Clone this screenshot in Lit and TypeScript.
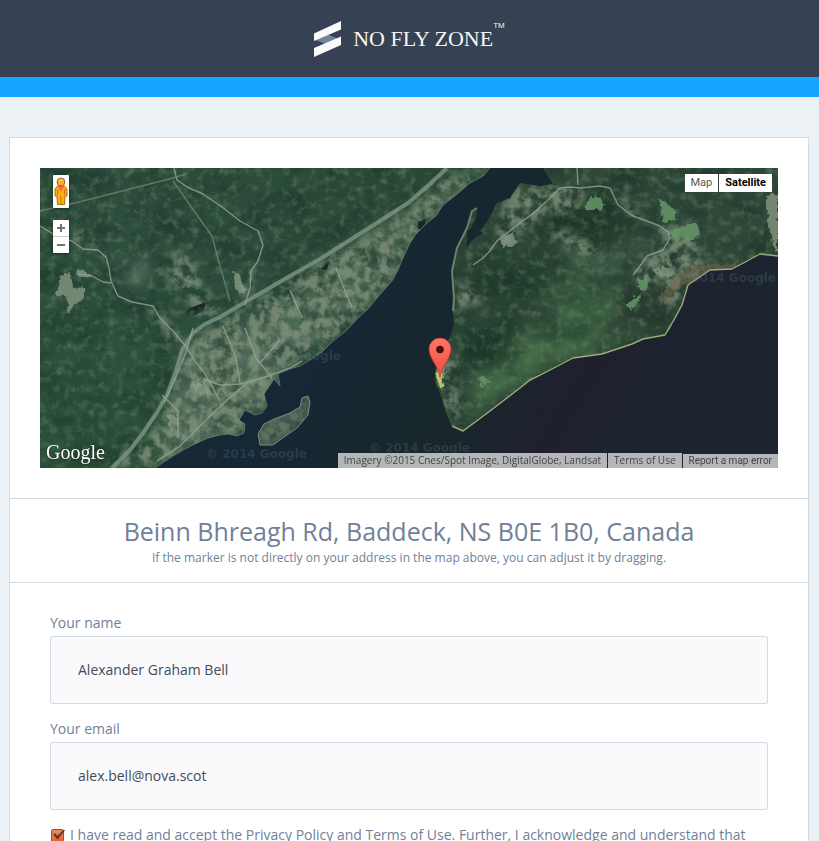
import { LitElement, html, css, svg } from "lit";
import { customElement, property, state } from "lit/decorators.js";

const EAST_SHORE =
  "M738 88L720 86L706 93L692 101L670 102L660 109L648 117L644 126L642 137L635 150L630 162L625 167L614 168L603 171L592 176L575 181L562 186L533 190L520 196L510 202L498 206L490 212L480 220L462 234L450 243L436 252L423 263L412 258L406 244L402 230L396 216L395 206L398 190L404 178L410 170L414 156L413 143L414 130L412 118L412 103L417 80L427 60L432 43L437 40L436 50L428 66L426 80L438 66L447 54L457 35L470 30L480 15L500 18L513 16L508 8L503 0";
const WEST_SHORE =
  "M450 0L443 8L430 15L416 27L403 37L396 48L387 55L376 66L370 75L363 90L358 102L352 113L344 122L337 130L328 141L318 150L306 163L293 173L282 184L270 192L260 198L250 201L238 206L240 218L234 211L230 217L224 226L227 238L222 245L215 247L205 242L199 252L205 256L204 265L197 268L188 266L180 267L168 270L157 275L145 281L133 288L115 300";
const ISLAND =
  "M218 266L224 256L234 251L250 245L260 239L262 230L268 228L270 234L268 247L257 260L244 269L233 277L220 277Z";

const MAIN_ROADS = [
  "M407 0L390 16L368 35L340 53L310 72L280 91L250 108L207 133L180 149L165 156L153 165L142 182L136 203L127 227L116 246L103 265L90 282L72 300",
];
const ROADS = [
  "M134 0L137 12L147 19L163 26L182 39L200 53L218 63L223 77L218 93L211 103L210 120L205 137",
  "M0 58L20 70L32 73L43 81L58 82L66 89L69 100L71 113L78 128L92 134L113 138L120 150L133 163L147 180L155 193L163 203L172 218L180 233",
  "M37 106L50 107L63 114L71 115",
  "M117 293L140 278L163 255L187 232L207 215L228 208L250 200L262 193",
  "M163 211L180 217L200 216L232 207",
  "M500 40L480 55L457 73L449 84L443 90L433 97",
  "M490 48L507 33L520 20L530 19L540 20L560 18L570 20L578 37L593 48L607 53L620 58L628 64L630 70L623 82L607 88L600 98L593 107",
  "M537 0L538 17",
  "M153 160L146 184L136 209L124 235",
  "M122 227L138 243L138 270M183 158L196 190L200 216M205 160L216 190L232 210",
  "M296 100L312 140M250 122L262 150M240 172L220 195",
];
const DIRT = ["M0 43L43 33L90 21L133 10L146 6", "M133 13L152 40L172 68L180 98L190 133"];

const SCRUB = [
  "M392 14L448 0L452 2L428 18L402 38L386 58L370 76L352 113L318 150L285 180L250 198L234 208L226 242L205 243L205 266L180 266L115 298L60 300L104 270L124 250L128 238L142 190L158 168L186 152L250 112L310 78L370 42Z",
  "M136 76L152 92L160 110L170 128L182 146L158 150L144 128L126 112Z",
  "M200 104L214 92L212 126L200 132Z",
  "M32 62L44 60L60 80L38 82Z",
  "M102 136L118 140L148 176L134 178Z",
  "M80 0L92 0L90 6L80 8Z",
  "M464 32L484 12L492 20L520 16L548 20L536 50L510 42L490 58L462 78L454 72Z",
  "M507 58L528 62L556 78L564 90L540 88L516 72Z",
  "M568 22L592 32L600 50L620 58L650 56L664 70L658 94L680 96L648 114L640 136L620 138L626 112L604 120L590 108L606 88L626 80L620 64L592 48Z",
  "M395 200L404 182L418 190L416 220L424 244L412 254L400 228Z",
  "M412 110L422 118L440 122L442 138L428 136L412 146Z",
];
const PALE_FIELDS = [
  "M20 108L30 104L33 120L44 119L44 130L34 136L30 145L26 141L28 130L16 126Z",
  "M34 103L44 103L52 108L38 109Z",
  "M193 102L200 108L205 124L200 128L195 117Z",
  "M126 247L136 246L139 256L130 260Z",
  "M148 216L164 214L174 226L162 228Z",
  "M460 70L474 66L476 77L462 79Z",
  "M613 102L624 98L637 106L622 110Z",
  "M726 28L738 26L738 86L733 77L732 66L727 58L728 44Z",
  "M396 208L400 188L406 192L402 216Z",
];
const GREEN_FIELDS = [
  "M620 32L625 33L637 46L635 51L623 55Z",
  "M628 63L657 55L660 67L652 73L642 69L632 72Z",
  "M585 137L600 126L601 130L591 141Z",
  "M598 112L607 108L608 120L600 124Z",
  "M545 36L552 29L562 30L563 43L548 42Z",
  "M439 210L446 209L450 214L443 220Z",
];

@customElement("satellite-map")
export class SatelliteMap extends LitElement {
  @state() private view: "map" | "satellite" = "satellite";

  static styles = css`
    :host {
      display: block;
      position: relative;
      height: 300px;
      overflow: hidden;
      background: #19242c;
    }
    .imagery {
      display: block;
      width: 100%;
      height: 100%;
    }
    button {
      display: block;
      margin: 0;
      padding: 0;
      border: 0;
      background: #fff;
      cursor: pointer;
    }
    .tools {
      position: absolute;
      top: 7px;
      left: 13px;
      width: 16px;
      display: grid;
      gap: 12px;
    }
    .pegman {
      width: 16px;
      height: 33px;
      border-radius: 1px;
      box-shadow: 0 1px 3px rgba(0, 0, 0, 0.4);
    }
    .pegman svg,
    .zoom svg {
      display: block;
      margin: auto;
    }
    .zoom {
      border-radius: 1px;
      overflow: hidden;
      box-shadow: 0 1px 3px rgba(0, 0, 0, 0.4);
    }
    .zoom button {
      width: 16px;
      height: 16px;
    }
    .zoom button + button {
      border-top: 1px solid #ccc;
      height: 17px;
    }
    .types {
      position: absolute;
      top: 6px;
      right: 6px;
      display: flex;
      gap: 1px;
      font: 11px/18px Roboto, sans-serif;
    }
    .types button {
      height: 18px;
      padding: 0 6px;
      font: inherit;
      color: #565656;
    }
    .types .active {
      font-weight: 700;
      color: #000;
    }
    .credits {
      position: absolute;
      right: 0;
      bottom: 0;
      display: flex;
      align-items: flex-end;
      gap: 1px;
      font: 10px/14px "Open Sans", sans-serif;
      color: #444;
    }
    .credits > * {
      padding: 0 6px 1px;
      background: rgba(245, 245, 245, 0.7);
      color: #444;
      text-decoration: none;
      white-space: nowrap;
    }
    .credits .report {
      padding-bottom: 0;
      font-family: Roboto, sans-serif;
    }
    .brand {
      position: absolute;
      left: 6px;
      bottom: 2px;
      font: 20px/28px "Liberation Serif", serif;
      color: #fff;
      text-decoration: none;
      text-shadow: 0 0 2px rgba(0, 0, 0, 0.6);
    }
  `;

  private renderImagery() {
    return html`<svg class="imagery" viewBox="0 0 738 300" preserveAspectRatio="xMidYMid slice" color-interpolation-filters="sRGB" role="img" aria-label="Satellite view">
      <defs>
        <linearGradient id="water" x1="0" x2="1" y1="0" y2="0.25">
          <stop offset="0" stop-color="#1a2b34"></stop>
          <stop offset="0.48" stop-color="#162736"></stop>
          <stop offset="0.7" stop-color="#18272b"></stop>
          <stop offset="0.86" stop-color="#1f202e"></stop>
          <stop offset="1" stop-color="#1c2430"></stop>
        </linearGradient>
        <linearGradient id="west" x1="0" x2="1" y1="1" y2="0">
          <stop offset="0" stop-color="#2c5139"></stop>
          <stop offset="0.5" stop-color="#2d4d3d"></stop>
          <stop offset="1" stop-color="#2a4935"></stop>
        </linearGradient>
        <linearGradient id="pin" x1="0" x2="0" y1="0" y2="1">
          <stop offset="0" stop-color="#ff776b"></stop>
          <stop offset="1" stop-color="#f04a3f"></stop>
        </linearGradient>
        <filter id="relief" x="0" y="0" width="100%" height="100%">
          <feTurbulence type="fractalNoise" baseFrequency="0.03 0.04" numOctaves="5" seed="8"></feTurbulence>
          <feColorMatrix values="0 0 0 0 0.08  0 0 0 0 0.18  0 0 0 0 0.14  2.6 0 0 0 -1.05"></feColorMatrix>
        </filter>
        <filter id="grain" x="0" y="0" width="100%" height="100%">
          <feTurbulence type="fractalNoise" baseFrequency="0.12" numOctaves="4" seed="3"></feTurbulence>
          <feColorMatrix values="0 0 0 0 0.42  0 0 0 0 0.55  0 0 0 0 0.43  0 2.4 0 0 -1.15"></feColorMatrix>
        </filter>
        <filter id="scrub" x="-5%" y="-5%" width="110%" height="110%">
          <feGaussianBlur in="SourceGraphic" stdDeviation="4" result="soft"></feGaussianBlur>
          <feTurbulence type="fractalNoise" baseFrequency="0.1" numOctaves="5" seed="21"></feTurbulence>
          <feColorMatrix values="0 0 0 0 0  0 0 0 0 0  0 0 0 0 0  0 0 3.6 0 -1.35" result="mask"></feColorMatrix>
          <feComposite in="soft" in2="mask" operator="in"></feComposite>
        </filter>
        <filter id="rough" x="-10%" y="-10%" width="120%" height="120%">
          <feTurbulence type="fractalNoise" baseFrequency="0.2" numOctaves="2" seed="5" result="n"></feTurbulence>
          <feDisplacementMap in="SourceGraphic" in2="n" scale="8" xChannelSelector="R" yChannelSelector="G"></feDisplacementMap>
          <feGaussianBlur stdDeviation="0.6"></feGaussianBlur>
        </filter>
        <filter id="haze" x="-30%" y="-30%" width="160%" height="160%"><feGaussianBlur stdDeviation="7"></feGaussianBlur></filter>
        <clipPath id="land">
          <path d="${WEST_SHORE}H0V0Z"></path>
          <path d="${EAST_SHORE}H738Z"></path>
          <path d=${ISLAND}></path>
        </clipPath>
      </defs>
      <rect width="738" height="300" fill="url(#water)"></rect>
      <g clip-path="url(#land)">
        <rect width="520" height="300" fill="url(#west)"></rect>
        <path d="${EAST_SHORE}H738Z" fill="#2f4839"></path>
        <path d=${ISLAND} fill="#46594e"></path>
        <g filter="url(#haze)">
          <path d="M440 195L490 165L550 130L610 150L600 170L530 188L480 215L440 240L420 255Z" fill="#4a734b" opacity="0.8"></path>
          <path d="M490 120L540 100L590 110L580 140L520 160Z" fill="#3f6546" opacity="0.6"></path>
          <path d="M515 62L570 92L625 62L632 74L600 88L560 108L520 92Z" fill="#52735a" opacity="0.55"></path>
          <path d="M80 92L108 86L106 116L86 118Z" fill="#5c7766" opacity="0.7"></path>
          <path d="M508 40L568 24L600 60L550 80L500 66Z" fill="#1c3527" opacity="0.7"></path>
          <path d="M440 80L500 88L520 116L460 150L430 130Z" fill="#223f2d" opacity="0.7"></path>
          <path d="M418 160L480 150L460 205L430 200Z" fill="#1d3a2a" opacity="0.8"></path>
          <path d="M590 98L630 120L646 120L630 160L560 175L570 150Z" fill="#2a3c31" opacity="0.8"></path>
          <path d="M142 190L158 168L190 152L250 140L290 165L250 198L230 230L200 260L120 296L124 250Z" fill="#5d7463" opacity="0.7"></path>
          <path d="M250 112L390 24L440 4L370 76L352 113L318 150L270 150Z" fill="#4d6853" opacity="0.7"></path>
        </g>
        <rect width="738" height="300" filter="url(#relief)" opacity="0.45"></rect>
        <g filter="url(#scrub)" fill="#87967f" opacity="0.75">${SCRUB.map((d) => svg`<path d=${d}></path>`)}<path d=${ISLAND} fill="#6e7b6e"></path></g>
        <g filter="url(#rough)">
          <g fill="#93a38a" opacity="0.7">${PALE_FIELDS.map((d) => svg`<path d=${d}></path>`)}</g>
          <g fill="#659868" opacity="0.85">${GREEN_FIELDS.map((d) => svg`<path d=${d}></path>`)}</g>
          <path d="M640 106L652 98L666 98L690 96L704 90L692 101L670 102L648 117L636 122L622 138L618 128Z" fill="#75644d" opacity="0.5"></path>
          <path d="M394 205L400 202L403 214L402 224Z" fill="#c6c969"></path>
        </g>
        <g fill="#142b23">
          <path d="M146 148C145 139 158 138 165 134C167 143 155 150 146 148Z"></path>
          <path d="M281 101L289 94L287 102Z"></path>
          <path d="M378 54L386 51L384 62L378 61Z"></path>
          <path d="M427 62L438 60L443 66L434 70L426 80Z"></path>
        </g>
        <rect width="738" height="300" filter="url(#grain)" opacity="0.5"></rect>
        <g fill="none" stroke-linejoin="round">
          <g stroke="#7a9080" stroke-width="4" opacity="0.85">${MAIN_ROADS.map((d) => svg`<path d=${d}></path>`)}</g>
          <g stroke="#93a596" stroke-width="1.4" opacity="0.8">${ROADS.map((d) => svg`<path d=${d}></path>`)}</g>
          <g stroke="#7f8b76" stroke-width="1.4" opacity="0.7">${DIRT.map((d) => svg`<path d=${d}></path>`)}</g>
        </g>
      </g>
      <g fill="none" stroke-linejoin="round">
        <path d=${WEST_SHORE} stroke="#8c9b89" stroke-width="1" opacity="0.5"></path>
        <path d="M738 88L720 86L692 101L670 102L648 117L642 137L635 150L625 167L603 171L592 176L562 186L533 190L510 202L490 212L480 220L450 243L423 263L412 258" stroke="#9eac7c" stroke-width="1.4"></path>
        <path d="M413 143L414 130L412 103L417 80L427 60L432 43L437 40" stroke="#6b8070" stroke-width="2"></path>
        <path d=${ISLAND} stroke="#7c8b7d" stroke-width="1"></path>
      </g>
      <g fill="#6f8798" opacity="0.22" font-family="DejaVu Sans, sans-serif" font-weight="bold" font-size="12">
        <text x="166" y="290">© 2014 Google</text>
        <text x="329" y="284">© 2014 Google</text>
        <text x="200" y="192">© 2014 Google</text>
        <text x="736" y="114" text-anchor="end">2014 Google</text>
      </g>
      <path d="M400 209.500C399 198 389 191 389 181A11 11 0 0 1 411 181C411 191 401 198 400 209.500Z" fill="url(#pin)" stroke="#bd372f" stroke-width="0.800"></path>
      <circle cx="400" cy="181.500" r="3.800" fill="#4b0d0b"></circle>
    </svg>`;
  }

  render() {
    return html`
      ${this.renderImagery()}
      <div class="tools">
        <button class="pegman" type="button" aria-label="Street View">
          <svg width="14" height="29" viewBox="0 0 14 29">
            <path d="M3.500 9H10.500L13 12V19H11L10.500 27.500H3.500L3 19H1V12Z" fill="#fbae17" stroke="#b16c08" stroke-width="1"></path>
            <path d="M3.500 12V18M10.500 12V18M7 19V27" stroke="#c67b09" stroke-width="1"></path>
            <path d="M3.500 9H10.500L7 14.500Z" fill="#f2644b"></path>
            <circle cx="7" cy="5" r="3.900" fill="#fbb029" stroke="#a86410"></circle>
            <path d="M4.800 4.200Q7 1.200 9 3.600" stroke="#ffe08a" fill="none"></path>
          </svg>
        </button>
        <div class="zoom">
          <button type="button" aria-label="Zoom in">
            <svg width="16" height="16"><path d="M4 8H12M8 4V12" stroke="#737373" stroke-width="2"></path></svg>
          </button>
          <button type="button" aria-label="Zoom out">
            <svg width="16" height="16"><path d="M4 8H12" stroke="#737373" stroke-width="2"></path></svg>
          </button>
        </div>
      </div>
      <div class="types">
        <button type="button" class=${this.view === "map" ? "active" : ""} @click=${() => (this.view = "map")}>Map</button>
        <button type="button" class=${this.view === "satellite" ? "active" : ""} @click=${() => (this.view = "satellite")}>Satellite</button>
      </div>
      <a class="brand" href="#">Google</a>
      <div class="credits">
        <span>Imagery ©2015 Cnes/Spot Image, DigitalGlobe, Landsat</span>
        <a href="#">Terms of Use</a>
        <a class="report" href="#">Report a map error</a>
      </div>
    `;
  }
}

@customElement("app-root")
export class AppRoot extends LitElement {
  @property() name = "Alexander Graham Bell";
  @property() email = "alex.bell@nova.scot";

  static styles = css`
    :host {
      display: flex;
      flex-direction: column;
      height: 100vh;
      overflow: hidden;
      box-sizing: border-box;
      background: #ebf1f5;
      color: #717f98;
      font: 14px/20px "Open Sans", sans-serif;
    }
    .header {
      flex: none;
      display: flex;
      justify-content: center;
      height: 77px;
      background: #364153;
      border-bottom: 20px solid #16a4ff;
    }
    .logo {
      display: flex;
      align-items: center;
      gap: 12px;
      color: #f6f6f4;
      text-decoration: none;
      font: 22px/34px "Liberation Serif", serif;
    }
    .logo svg {
      display: block;
    }
    .tm {
      align-self: flex-start;
      margin: 20px 0 0 -12px;
      font: 8px/12px "Liberation Sans", sans-serif;
    }
    .page {
      flex: 1;
      display: flex;
      padding: 40px 10px 0 9px;
    }
    .card {
      flex: 1;
      max-width: 800px;
      margin: 0 auto;
      box-sizing: border-box;
      border: 1px solid #d0dce4;
      border-bottom: 0;
      background: #fff;
    }
    .map {
      padding: 30px;
    }
    .address {
      padding: 15px 20px;
      border: solid #d0dce4;
      border-width: 1px 0;
      text-align: center;
    }
    h1 {
      margin: 0;
      font-size: 25px;
      line-height: 34px;
      font-weight: 400;
    }
    .hint {
      margin: 0;
      font-size: 12px;
      line-height: 19px;
    }
    form {
      display: grid;
      gap: 15px;
      padding: 30px 40px;
    }
    .field {
      display: grid;
      gap: 3px;
    }
    .field input {
      width: 100%;
      height: 68px;
      box-sizing: border-box;
      margin: 0;
      padding: 0 27px 2px;
      border: 1px solid #d0dde5;
      border-radius: 2px;
      background: #fafafc;
      color: #434b59;
      font: inherit;
      outline: 0;
    }
    .terms {
      display: flex;
      align-items: center;
      gap: 6px;
      white-space: nowrap;
    }
    .terms input {
      appearance: none;
      flex: none;
      position: relative;
      width: 13px;
      height: 13px;
      margin: 0 0 0 1px;
      border: 1px solid #a8492a;
      border-radius: 2px;
      background: linear-gradient(#f58a5b, #e8622f);
    }
    .terms input:checked::after {
      content: "";
      position: absolute;
      left: 1px;
      top: 0;
      width: 12px;
      height: 10px;
      background: #493d38;
      clip-path: polygon(0 48%, 18% 38%, 36% 66%, 90% 0, 100% 8%, 38% 100%);
    }
  `;

  render() {
    return html`
      <header class="header">
        <a class="logo" href="#">
          <svg width="27" height="36" viewBox="0 0 27 36" aria-hidden="true">
            <path d="M0 18.500L14 13.500L27 19L12 23Z" fill="#74829b"></path>
            <path d="M0 12.500L27 0V8.500L0 20Z" fill="#fafafa"></path>
            <path d="M0 27L27 15.500V24L0 36Z" fill="#fafafa"></path>
          </svg>
          <span>NO FLY ZONE</span><span class="tm">TM</span>
        </a>
      </header>
      <main class="page">
        <section class="card">
          <div class="map"><satellite-map></satellite-map></div>
          <div class="address">
            <h1>Beinn Bhreagh Rd, Baddeck, NS B0E 1B0, Canada</h1>
            <p class="hint">If the marker is not directly on your address in the map above, you can adjust it by dragging.</p>
          </div>
          <form>
            <div class="field">
              <label for="name">Your name</label>
              <input id="name" type="text" .value=${this.name} />
            </div>
            <div class="field">
              <label for="email">Your email</label>
              <input id="email" type="email" .value=${this.email} />
            </div>
            <div class="terms">
              <input id="terms" type="checkbox" checked />
              <label for="terms">I have read and accept the Privacy Policy and Terms of Use. Further, I acknowledge and understand that</label>
            </div>
          </form>
        </section>
      </main>
    `;
  }
}
